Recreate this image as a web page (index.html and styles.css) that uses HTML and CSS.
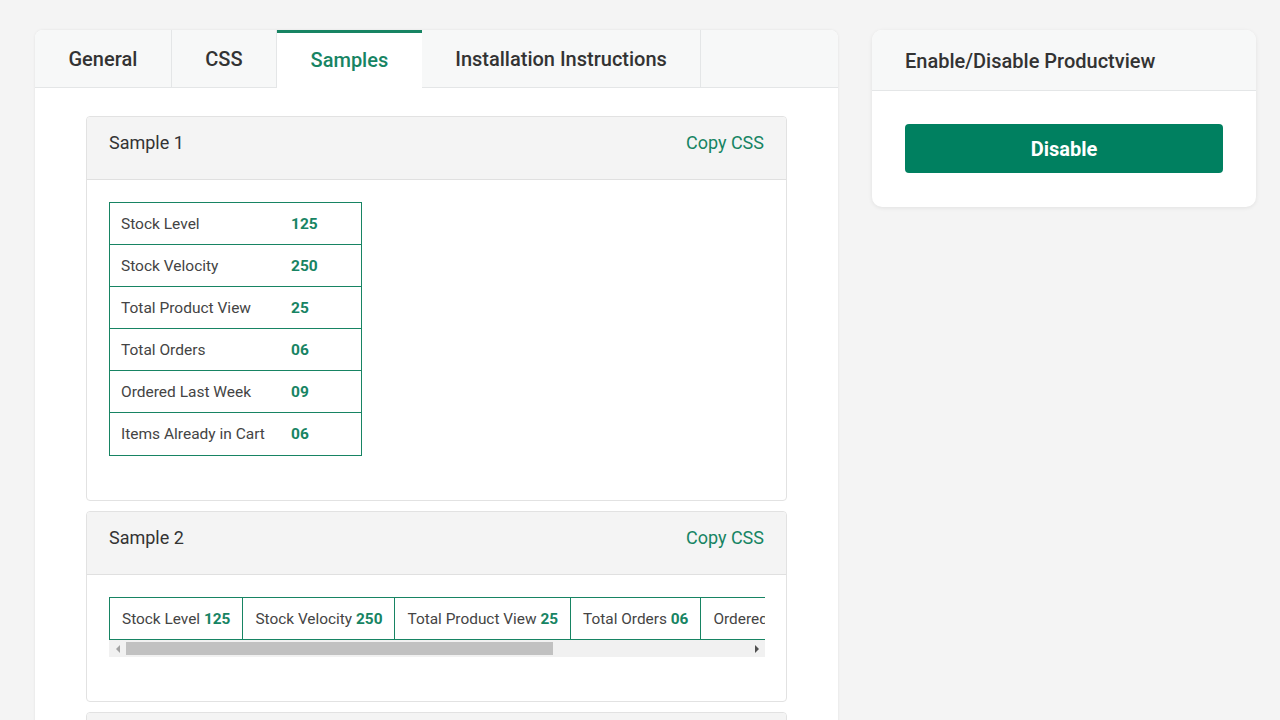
FILE: index.html
```html
<!DOCTYPE html>
<html lang="en">
<head>
<meta charset="utf-8">
<title>Productview Settings</title>
<link rel="stylesheet" href="styles.css">
</head>
<body>
<div class="page">
  <section class="main-card">
    <nav class="tabs">
      <div class="tab">General</div>
      <div class="tab">CSS</div>
      <div class="tab active">Samples</div>
      <div class="tab">Installation Instructions</div>
      <div class="tab-fill"></div>
    </nav>
    <div class="main-body">
      <div class="sample">
        <div class="sample-head">
          <span class="sample-title">Sample 1</span>
          <span class="copy">Copy CSS</span>
        </div>
        <div class="sample-body">
          <div class="vtable">
            <div class="vrow"><span>Stock Level</span><b>125</b></div>
            <div class="vrow"><span>Stock Velocity</span><b>250</b></div>
            <div class="vrow"><span>Total Product View</span><b>25</b></div>
            <div class="vrow"><span>Total Orders</span><b>06</b></div>
            <div class="vrow"><span>Ordered Last Week</span><b>09</b></div>
            <div class="vrow"><span>Items Already in Cart</span><b>06</b></div>
          </div>
        </div>
      </div>
      <div class="sample">
        <div class="sample-head">
          <span class="sample-title">Sample 2</span>
          <span class="copy">Copy CSS</span>
        </div>
        <div class="sample-body">
          <div class="hscroll">
            <div class="hview">
              <div class="htable">
                <div class="hcell">Stock Level <b>125</b></div>
                <div class="hcell">Stock Velocity <b>250</b></div>
                <div class="hcell">Total Product View <b>25</b></div>
                <div class="hcell">Total Orders <b>06</b></div>
                <div class="hcell">Ordered Last Week <b>09</b></div>
                <div class="hcell">Items Already in Cart <b>06</b></div>
              </div>
            </div>
            <div class="scrollbar">
              <span class="sb-btn"><i class="arrow-left"></i></span>
              <span class="sb-track"><span class="sb-thumb"></span></span>
              <span class="sb-btn"><i class="arrow-right"></i></span>
            </div>
          </div>
        </div>
      </div>
      <div class="sample">
        <div class="sample-head">
          <span class="sample-title">Sample 3</span>
          <span class="copy">Copy CSS</span>
        </div>
        <div class="sample-body"></div>
      </div>
    </div>
  </section>
  <aside class="side-card">
    <div class="side-head">Enable/Disable Productview</div>
    <div class="side-body">
      <button class="btn">Disable</button>
    </div>
  </aside>
</div>
</body>
</html>
```
FILE: styles.css
```css
* { box-sizing: border-box; }
html, body { margin: 0; padding: 0; }
body {
  background: #f4f4f4;
  font-family: Roboto, "Liberation Sans", Arial, sans-serif;
  color: #333;
  height: 720px;
  overflow: hidden;
}
.page {
  display: flex;
  align-items: flex-start;
  gap: 34px;
  padding: 30px 24px 0 35px;
}
.main-card {
  width: 803px;
  flex: none;
  background: #fff;
  border-radius: 8px 8px 0 0;
  box-shadow: 0 0 3px rgba(0,0,0,0.08);
  min-height: 760px;
}
.tabs {
  display: flex;
  height: 58px;
  background: #f7f8f8;
  border-bottom: 1px solid #e4e6e7;
  border-radius: 8px 8px 0 0;
}
.tab {
  padding: 1px 33.5px 0;
  display: flex;
  align-items: center;
  font-size: 20px;
  font-weight: 500;
  color: #333;
  border-right: 1px solid #e4e6e7;
}
.tab.active {
  background: #fff;
  color: #178463;
  border-top: 3px solid #178463;
  border-right: none;
  margin-bottom: -1px;
  padding: 0 33.5px 2px;
}
.tab-fill { flex: 1; }
.main-body {
  padding: 28px 51px 0;
  display: flex;
  flex-direction: column;
  gap: 10px;
}
.sample {
  border: 1px solid #e2e2e2;
  border-radius: 4px;
  background: #fff;
}
.sample-head {
  height: 63px;
  background: #f4f4f4;
  border-bottom: 1px solid #e0e0e0;
  border-radius: 4px 4px 0 0;
  display: flex;
  align-items: flex-start;
  justify-content: space-between;
  padding: 15px 22px 0;
  line-height: 22px;
}
.sample-title { font-size: 18px; color: #333; }
.copy { font-size: 18px; color: #178463; }
.sample-body {
  padding: 22px 22px 44px;
  min-height: 100px;
}
.vtable {
  width: 253px;
  border: 1px solid #178463;
}
.vrow {
  display: grid;
  grid-template-columns: 170px 1fr;
  align-items: center;
  height: 42px;
  padding: 0 11px;
  font-size: 15.5px;
  color: #444;
  border-bottom: 1px solid #178463;
}
.vrow:last-child { border-bottom: none; }
.vrow b, .hcell b { color: #178463; font-weight: 700; }
.hscroll { width: 656px; }
.hview { overflow: hidden; }
.htable {
  display: flex;
  width: max-content;
  border-top: 1px solid #178463;
  border-bottom: 1px solid #178463;
  border-left: 1px solid #178463;
}
.hcell {
  height: 41px;
  line-height: 41px;
  padding: 1px 12px 0;
  font-size: 15.4px;
  color: #444;
  white-space: nowrap;
  border-right: 1px solid #178463;
}
.scrollbar {
  display: flex;
  height: 17px;
  background: #f1f1f1;
}
.sb-btn {
  width: 17px;
  flex: none;
  display: flex;
  align-items: center;
  justify-content: center;
}
.arrow-left {
  width: 0; height: 0;
  border-top: 4px solid transparent;
  border-bottom: 4px solid transparent;
  border-right: 4px solid #a3a3a3;
}
.arrow-right {
  width: 0; height: 0;
  border-top: 4px solid transparent;
  border-bottom: 4px solid transparent;
  border-left: 4px solid #505050;
}
.sb-track {
  flex: 1;
  display: flex;
  align-items: center;
}
.sb-thumb {
  width: 427px;
  height: 13px;
  background: #c1c1c1;
}
.side-card {
  width: 384px;
  flex: none;
  background: #fff;
  border-radius: 10px;
  box-shadow: 0 1px 4px rgba(0,0,0,0.08);
}
.side-head {
  height: 61px;
  background: #f7f8f8;
  border-bottom: 1px solid #e4e6e7;
  border-radius: 10px 10px 0 0;
  padding: 2px 33px 0;
  display: flex;
  align-items: center;
  font-size: 20px;
  font-weight: 500;
  color: #333;
}
.side-body { padding: 33px 33px 34px; }
.btn {
  display: block;
  width: 100%;
  height: 49px;
  border: none;
  border-radius: 4px;
  background: #008060;
  color: #fff;
  font-family: Roboto, "Liberation Sans", Arial, sans-serif;
  font-size: 20px;
  font-weight: 700;
}
```
